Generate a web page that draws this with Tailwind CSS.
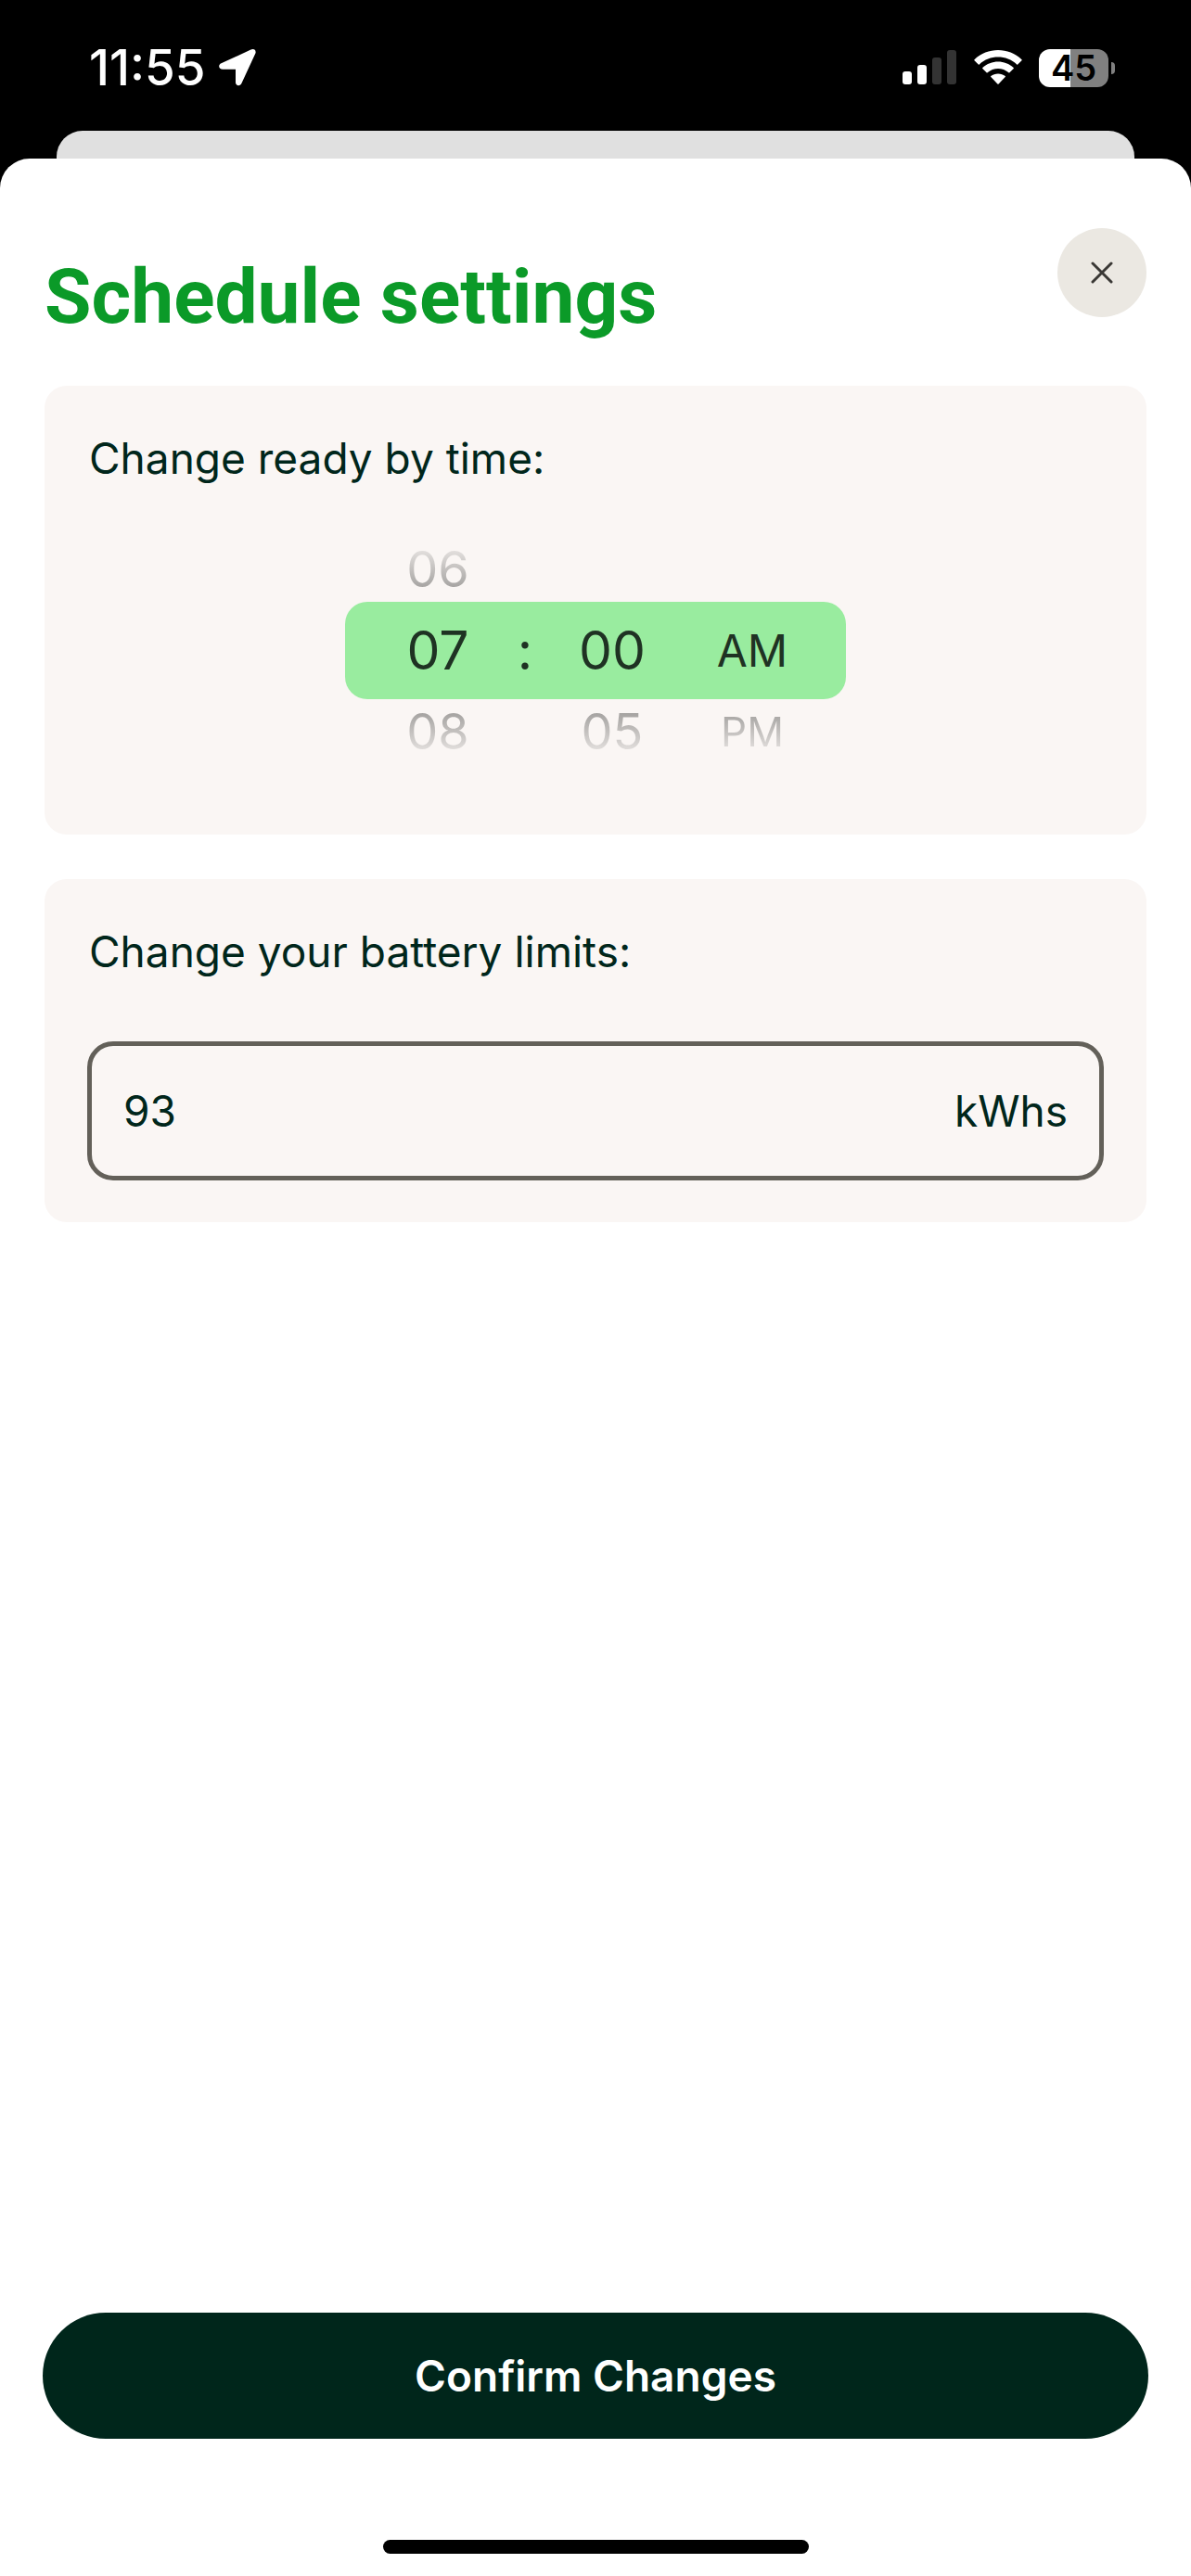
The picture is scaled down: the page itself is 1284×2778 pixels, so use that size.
<!DOCTYPE html>
<html lang="en">
<head>
<meta charset="utf-8">
<meta name="viewport" content="width=device-width, initial-scale=1">
<title>Schedule settings</title>
<script src="https://cdn.jsdelivr.net/npm/@tailwindcss/browser@4"></script>
</head>
<body class="flex min-h-screen flex-col bg-black font-['Inter',sans-serif] text-[#00261b]">

<!-- Status bar -->
<header class="flex h-[141px] items-start justify-between pt-[43px] pr-[82px] pl-24 text-white">
  <div class="flex h-[60px] items-center gap-[14px]">
    <span class="text-[53px] leading-[60px] font-medium">11:55</span>
    <svg class="h-10 w-10" viewBox="0 0 40 40" fill="currentColor" aria-label="Location in use"><path d="M34.500 .6C37.500-1 40.500 1 39.400 4.600L24.600 36.500C23 40.500 18 39.800 18 35.800V21.800H4.200C-.3 21.800-1.200 16.800 2.500 15.200Z"/></svg>
  </div>
  <div class="flex h-[60px] items-center">
    <svg class="h-[38px] w-[58px]" viewBox="0 0 58 38" fill="currentColor" aria-label="Cellular signal"><rect x="0" y="23" width="10" height="14" rx="3"/><rect x="16" y="16" width="10" height="21" rx="3"/><rect x="32" y="8" width="10" height="29" rx="3" fill="#333"/><rect x="48" y="0" width="10" height="37" rx="3" fill="#333"/></svg>
    <svg class="ml-[19px] h-[38px] w-[52px]" viewBox="0 0 52 38" fill="currentColor" aria-label="Wi-Fi"><path d="M.5 10.200C14.500-3.400 37.500-3.400 51.500 10.200Q52 10.700 51.500 11.200L47.200 15.500Q46.700 16 46.200 15.500C35 4.900 17 4.900 5.800 15.500Q5.300 16 4.800 15.500L.5 11.200Q0 10.700 .5 10.200Z"/><path d="M9.300 19C18.500 10.300 33.500 10.300 42.700 19Q43.200 19.500 42.700 20L38.400 24.300Q37.900 24.800 37.400 24.300C31 18.500 21 18.500 14.600 24.300Q14.100 24.800 13.600 24.300L9.300 20Q8.800 19.500 9.300 19Z"/><path d="M18.300 28C22.500 24.500 29.500 24.500 33.700 28Q34.200 28.500 33.700 29L26.600 36.500Q26 37 25.400 36.500L18.300 29Q17.800 28.500 18.300 28Z"/></svg>
    <div class="ml-[18px] flex items-center gap-[3px]">
      <span class="flex h-[41px] w-[75px] items-center justify-center rounded-[12px] bg-linear-to-r from-white from-45% to-[#808080] to-45% text-[38px] leading-[41px] font-semibold text-black">45</span>
      <span class="h-[13px] w-1 rounded-r-full bg-[#808080]"></span>
    </div>
  </div>
</header>

<div class="mx-[61px] h-[30px] rounded-t-[28px] bg-[#e0e0e0]"></div>

<main class="flex grow flex-col rounded-t-[32px] bg-white px-12 pt-[75px]">
  <div class="flex items-start justify-between">
    <h1 class="pt-[26px] font-['Roboto',sans-serif] text-[82px] leading-[96px] font-bold text-[#0b9a28]">Schedule settings</h1>
    <button type="button" aria-label="Close" class="flex size-24 items-center justify-center rounded-full bg-[#ebe8e2] text-[#3a3835]">
      <svg class="size-6" viewBox="0 0 24 24" fill="none" stroke="currentColor" stroke-width="3" stroke-linecap="round"><path d="M2 2L22 22M22 2L2 22"/></svg>
    </button>
  </div>

  <section class="mt-12 rounded-[24px] bg-[#faf6f4] px-[46px] pt-[50px] pb-[76px]">
    <h2 class="pl-[2px] text-[46px] leading-[56px]">Change ready by time:</h2>
    <div class="mx-auto mt-14 w-[540px] text-[#1f3223]" role="group" aria-label="Ready by time">
      <div class="grid h-[71px] grid-cols-[108px_80px_108px_1fr] items-center pr-1 pl-[46px] text-[54px]">
        <button type="button" class="bg-linear-to-b from-[#e8e4e2] from-10% to-[#a09e9c] to-90% bg-clip-text leading-[60px] text-transparent">06</button>
      </div>
      <div class="grid h-[105px] grid-cols-[108px_80px_108px_1fr] items-center rounded-[24px] bg-[#99ec9f] pr-1 pl-[46px] text-[57px] leading-[60px]">
        <button type="button">07</button>
        <span class="text-center">:</span>
        <button type="button">00</button>
        <button type="button" class="text-[48px]">AM</button>
      </div>
      <div class="grid h-[70px] grid-cols-[108px_80px_108px_1fr] items-center pr-1 pl-[46px] text-[54px] leading-[60px]">
        <button type="button" class="bg-linear-to-b from-[#a09e9c] from-10% to-[#e8e4e2] to-90% bg-clip-text text-transparent">08</button>
        <span></span>
        <button type="button" class="bg-linear-to-b from-[#a09e9c] from-10% to-[#e8e4e2] to-90% bg-clip-text text-transparent">05</button>
        <button type="button" class="bg-linear-to-b from-[#a09e9c] from-10% to-[#e8e4e2] to-90% bg-clip-text text-[44px] text-transparent">PM</button>
      </div>
    </div>
  </section>

  <section class="mt-12 rounded-[24px] bg-[#faf6f4] px-[46px] pt-[50px] pb-[45px]">
    <label for="limit" class="block pl-[2px] text-[46px] leading-[56px]">Change your battery limits:</label>
    <div class="mt-[69px] flex h-[150px] items-center rounded-[28px] border-5 border-[#636059] px-[34px] text-[46px]">
      <input id="limit" type="text" inputmode="numeric" value="93" class="min-w-0 grow bg-transparent outline-none">
      <span>kWhs</span>
    </div>
  </section>

  <button type="button" class="-mx-[2px] mt-auto h-[136px] rounded-full bg-[#00261b] text-[46px] font-semibold text-white">Confirm Changes</button>
  <div class="mx-auto mt-[109px] mb-6 h-[15px] w-[459px] rounded-full bg-black"></div>
</main>
</body>
</html>
